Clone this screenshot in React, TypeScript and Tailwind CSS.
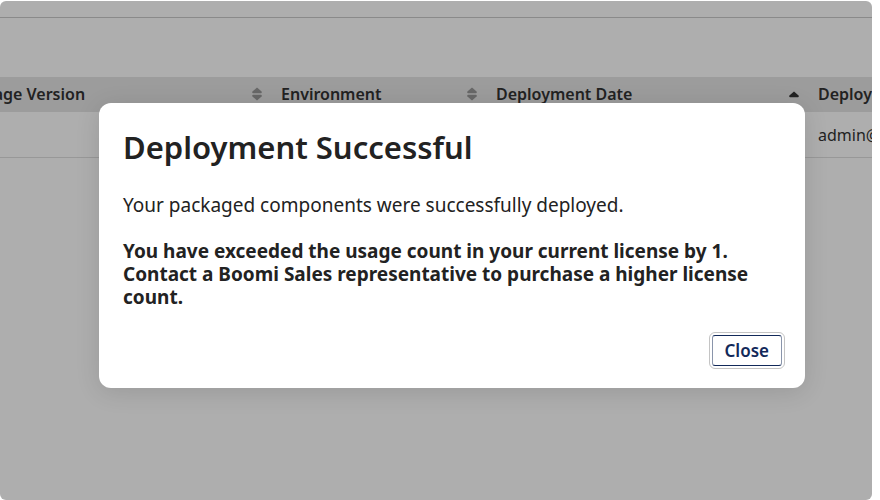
import React from 'react';

function SortBoth() {
  return (
    <svg className="h-[14px] w-[10px] shrink-0 fill-[#686868]" viewBox="0 0 10 14" aria-hidden="true">
      <path d="M5 0.5 9.6 4.6Q10.2 6.2 8.8 6.2H1.2Q-0.2 6.2 0.4 4.6Z" />
      <path d="M5 13.5 9.6 9.4Q10.2 7.8 8.8 7.8H1.2Q-0.2 7.8 0.4 9.4Z" />
    </svg>
  );
}

function SortUp() {
  return (
    <svg className="h-[14px] w-[10px] shrink-0 fill-[#222]" viewBox="0 0 10 14" aria-hidden="true">
      <path d="M5 4.4 9.6 8.6Q10.2 10.2 8.8 10.2H1.2Q-0.2 10.2 0.4 8.6Z" />
    </svg>
  );
}

function HeadCell({ label, icon }: { label: string; icon?: React.ReactNode }) {
  return (
    <th scope="col" className="h-[35px] bg-[#9c9c9c] pr-[7px] pb-px pl-3 text-left font-semibold">
      <div className="flex items-center justify-between whitespace-nowrap">
        {label}
        {icon}
      </div>
    </th>
  );
}

export default function App() {
  return (
    <div className="relative min-h-screen bg-white pt-px pr-2 font-['Noto_Sans',sans-serif] text-[#222]">
      <main className="h-[calc(100vh-1px)] overflow-hidden rounded-md bg-[#aeaeae]">
        <div className="h-[17px] border-b border-[#8a8a8a]" />
        <div className="-ml-[55px] pt-[59px]">
          <table className="w-[1100px] table-fixed border-collapse text-base">
            <colgroup>
              <col className="w-[324px]" />
              <col className="w-[215px]" />
              <col className="w-[322px]" />
              <col />
            </colgroup>
            <thead>
              <tr>
                <HeadCell label="Package Version" icon={<SortBoth />} />
                <HeadCell label="Environment" icon={<SortBoth />} />
                <HeadCell label="Deployment Date" icon={<SortUp />} />
                <HeadCell label="Deployed By" />
              </tr>
            </thead>
            <tbody>
              <tr className="h-[45px] border-b border-[#989898]">
                <td />
                <td />
                <td />
                <td className="px-3 pt-0.5">admin@</td>
              </tr>
            </tbody>
          </table>
        </div>
      </main>

      <div className="absolute inset-0 pt-[103px] pr-[75px] pl-[99px]">
        <section
          role="dialog"
          aria-modal="true"
          aria-labelledby="dialog-title"
          className="rounded-xl bg-white pt-[23px] pr-[23px] pb-[22px] pl-6 shadow-[0_4px_24px_rgba(0,0,0,0.12)]"
        >
          <h1 id="dialog-title" className="text-[31px] leading-[42px] font-semibold">
            Deployment Successful
          </h1>
          <p className="mt-[26px] text-[19px] leading-[23px]">Your packaged components were successfully deployed.</p>
          <p className="mt-[23px] text-[19px] leading-[23px] font-bold">
            You have exceeded the usage count in your current license by 1. Contact a Boomi Sales representative to
            purchase a higher license count.
          </p>
          <div className="mt-[26px] flex justify-end">
            <button
              type="button"
              className="h-[31px] rounded-[3px] border border-x-[#8a95ab] border-y-[#12295a] bg-white px-3 text-[17px] leading-none font-semibold text-[#12295a] outline outline-offset-2 outline-[#c4c4c4]"
            >
              Close
            </button>
          </div>
        </section>
      </div>
    </div>
  );
}
